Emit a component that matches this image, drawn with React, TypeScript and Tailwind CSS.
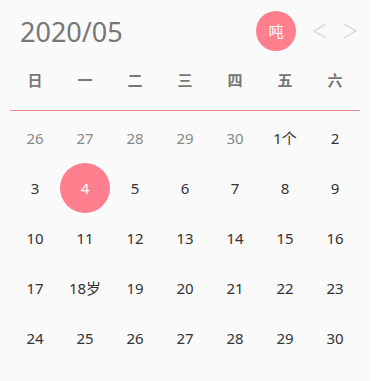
const weekdays = ["日", "一", "二", "三", "四", "五", "六"];

type Day = { label: string; muted?: boolean; selected?: boolean };

const days: Day[] = [
  { label: "26", muted: true },
  { label: "27", muted: true },
  { label: "28", muted: true },
  { label: "29", muted: true },
  { label: "30", muted: true },
  { label: "1个" },
  { label: "2" },
  { label: "3" },
  { label: "4", selected: true },
  ...Array.from({ length: 13 }, (_, i) => ({ label: String(i + 5) })),
  { label: "18岁" },
  ...Array.from({ length: 12 }, (_, i) => ({ label: String(i + 19) })),
];

const App = () => {
  return (
    <div
      className="w-[370px] h-[381px] bg-[#fafafa]"
      style={{ fontFamily: '"Noto Sans", "Noto Sans CJK SC", sans-serif' }}
    >
      {/* header */}
      <div className="flex items-center h-[62px] pl-[20px] pr-[12px]">
        <h1 className="text-[27px] text-[#777] font-normal leading-none">
          2020/05
        </h1>
        <div className="ml-auto w-[40px] h-[40px] rounded-full bg-[#ff7f8e] flex items-center justify-center text-white text-[15px]">
          吨
        </div>
        <div className="flex items-center gap-[14px] ml-[16px] text-[#ddd]">
          <svg width="16" height="18" viewBox="0 0 16 18" fill="none" stroke="currentColor" strokeWidth="1.5">
            <path d="M14 2 L2 9 L14 16" />
          </svg>
          <svg width="16" height="18" viewBox="0 0 16 18" fill="none" stroke="currentColor" strokeWidth="1.5">
            <path d="M2 2 L14 9 L2 16" />
          </svg>
        </div>
      </div>

      {/* weekdays */}
      <div className="mx-[10px] grid grid-cols-7 h-[49px] items-start pt-[7px] border-b border-[#e8848f]">
        {weekdays.map((w) => (
          <div key={w} className="text-center text-[15px] leading-[22px] font-bold text-[#777]">
            {w}
          </div>
        ))}
      </div>

      {/* days */}
      <div className="mx-[10px] pt-[2px] grid grid-cols-7">
        {days.map((d, i) => (
          <div key={i} className="h-[50px] flex items-center justify-center">
            {d.selected ? (
              <div className="w-[50px] h-[50px] rounded-full bg-[#ff7f8e] flex items-center justify-center text-white text-[15px]">
                {d.label}
              </div>
            ) : (
              <span className={`text-[15px] ${d.muted ? "text-[#888]" : "text-[#333]"}`}>
                {d.label}
              </span>
            )}
          </div>
        ))}
      </div>
    </div>
  );
};

export default App;
